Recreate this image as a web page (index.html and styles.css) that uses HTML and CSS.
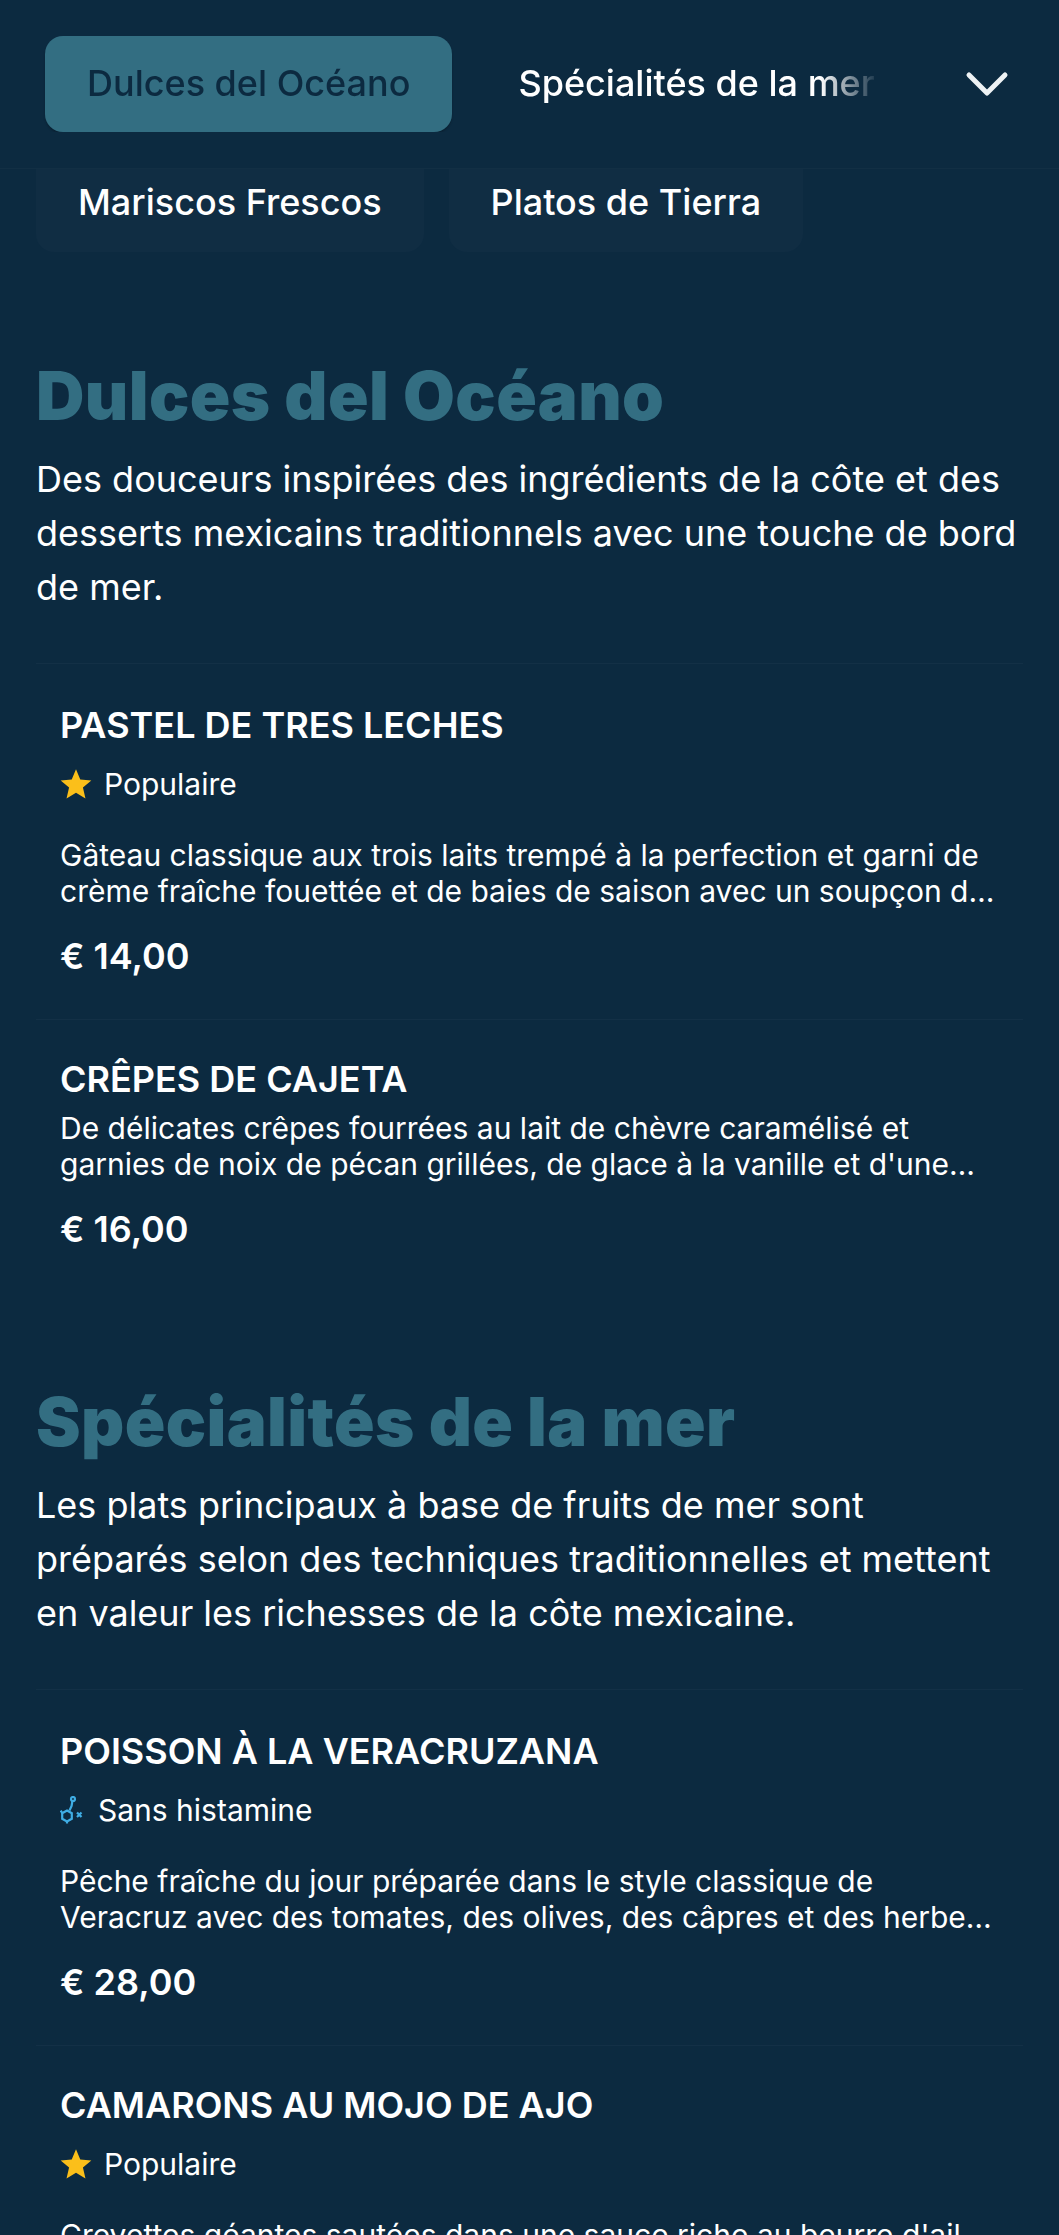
FILE: index.html
```html
<!DOCTYPE html>
<html lang="fr">
  <head>
    <meta charset="UTF-8" />
    <title>Menu</title>
    <link rel="stylesheet" href="styles.css">
  </head>
  <body>
    <header class="topBar">
      <nav class="tabScroller">
        <a class="tab tabActive">Dulces del Océano</a>
        <a class="tab">Spécialités de la mer</a>
        <a class="tab">Mariscos Frescos</a>
      </nav>
      <button class="moreButton" type="button" aria-label="Plus">
        <svg width="44" height="28" viewBox="0 0 44 28" fill="none">
          <path d="M4 5 L22 23 L40 5" stroke="#eef2f4" stroke-width="5" stroke-linecap="round" stroke-linejoin="round" />
        </svg>
      </button>
    </header>

    <div class="chipRow">
      <a class="chip">Mariscos Frescos</a>
      <a class="chip">Platos de Tierra</a>
    </div>

    <main>
      <section class="menuSection">
        <h2 class="sectionTitle">Dulces del Océano</h2>
        <p class="sectionText">Des douceurs inspirées des ingrédients de la côte et des desserts mexicains traditionnels avec une touche de bord de mer.</p>
        <div class="itemList">
          <article class="menuItem">
            <h3 class="itemTitle">PASTEL DE TRES LECHES</h3>
            <div class="itemTag">
              <svg class="starIcon" viewBox="0 0 24 24"><path d="M12 1 L15.2 8.6 L23.5 9.3 L17.2 14.7 L19.1 22.8 L12 18.5 L4.9 22.8 L6.8 14.7 L.5 9.3 L8.8 8.6 Z" /></svg>
              <span>Populaire</span>
            </div>
            <p class="itemText">Gâteau classique aux trois laits trempé à la perfection et garni de crème fraîche fouettée et de baies de saison avec un soupçon de cannelle et de vanille douce.</p>
            <div class="itemPrice">€ 14,00</div>
          </article>
          <article class="menuItem">
            <h3 class="itemTitle">CRÊPES DE CAJETA</h3>
            <p class="itemText">De délicates crêpes fourrées au lait de chèvre caramélisé et garnies de noix de pécan grillées, de glace à la vanille et d'une touche de sauce au rhum maison.</p>
            <div class="itemPrice">€ 16,00</div>
          </article>
        </div>
      </section>

      <section class="menuSection">
        <h2 class="sectionTitle">Spécialités de la mer</h2>
        <p class="sectionText">Les plats principaux à base de fruits de mer sont préparés selon des techniques traditionnelles et mettent en valeur les richesses de la côte mexicaine.</p>
        <div class="itemList">
          <article class="menuItem">
            <h3 class="itemTitle">POISSON À LA VERACRUZANA</h3>
            <div class="itemTag">
              <svg class="allergenIcon" viewBox="0 0 25 28" fill="none">
                <circle cx="13" cy="3" r="2" />
                <path d="M12.4 5 L11.6 10 L9.5 14.5" />
                <path d="M7 14.5 L11.8 17.2 L11.8 22.8 L7 25.5 L2.2 22.8 L2.2 17.2 Z" />
                <path d="M2.2 17.2 L.8 14.5" />
                <path d="M7 25.5 L7 27.5" />
                <path d="M17 16.5 L21.5 21 M21.5 16.5 L17 21" />
              </svg>
              <span>Sans histamine</span>
            </div>
            <p class="itemText">Pêche fraîche du jour préparée dans le style classique de Veracruz avec des tomates, des olives, des câpres et des herbes fraîches du jardin servie avec du riz blanc.</p>
            <div class="itemPrice">€ 28,00</div>
          </article>
          <article class="menuItem">
            <h3 class="itemTitle">CAMARONS AU MOJO DE AJO</h3>
            <div class="itemTag">
              <svg class="starIcon" viewBox="0 0 24 24"><path d="M12 1 L15.2 8.6 L23.5 9.3 L17.2 14.7 L19.1 22.8 L12 18.5 L4.9 22.8 L6.8 14.7 L.5 9.3 L8.8 8.6 Z" /></svg>
              <span>Populaire</span>
            </div>
            <p class="itemText">Crevettes géantes sautées dans une sauce riche au beurre d'ail caramélisé et aux piments guajillo, servies avec du riz et des légumes de saison grillés.</p>
            <div class="itemPrice">€ 26,00</div>
          </article>
        </div>
      </section>
    </main>
  </body>
</html>
```

FILE: styles.css
```css
html,
body {
  height: 2235px;
  overflow: hidden;
}
body {
  margin: 0;
  background-color: #0c2a40;
  color: #ffffff;
  font-family: "Inter", sans-serif;
}
.topBar {
  display: flex;
  align-items: center;
  height: 169px;
  border-bottom: 1px solid #122f44;
  box-sizing: border-box;
}
.tabScroller {
  display: flex;
  align-items: center;
  gap: 24px;
  width: 880px;
  padding-left: 45px;
  box-sizing: border-box;
  overflow: hidden;
  -webkit-mask-image: linear-gradient(to right, #000 820px, transparent 880px);
  mask-image: linear-gradient(to right, #000 820px, transparent 880px);
}
.tab {
  flex: none;
  padding: 0 42px;
  height: 96px;
  line-height: 94px;
  font-size: 36px;
  font-weight: 500;
  border-radius: 18px;
}
.tabActive {
  background-color: #336e82;
  color: #0c2a40;
  box-shadow: 0 2px 2px rgba(0, 0, 0, 0.2);
}
.moreButton {
  margin-left: 85px;
  padding: 0;
  border: none;
  background: none;
  display: flex;
}
.chipRow {
  display: flex;
  gap: 25px;
  height: 83px;
  padding-left: 36px;
  overflow: hidden;
}
.chip {
  height: 83px;
  line-height: 67px;
  padding: 0 42px;
  font-size: 36px;
  font-weight: 500;
  background-color: #102d43;
  border-radius: 0 0 18px 18px;
}
.menuSection {
  padding: 0 36px;
  margin-bottom: 90px;
}
.sectionTitle {
  margin: 0;
  padding-top: 104px;
  font-size: 67px;
  line-height: 80px;
  font-weight: 900;
  letter-spacing: 0.4px;
  color: #336e82;
}
.menuSection + .menuSection .sectionTitle {
  padding-top: 0;
}
.sectionText {
  margin: 16px 0 0;
  font-size: 36px;
  line-height: 54px;
}
.itemList {
  margin-top: 49px;
  border-top: 1px solid #133046;
}
.menuItem {
  padding: 37px 24px 41px;
  border-bottom: 1px solid #133046;
}
.menuItem:first-child {
  padding-top: 39px;
}
.menuItem:last-child {
  border-bottom: none;
}
.itemTitle {
  margin: 0;
  font-size: 36px;
  line-height: 44px;
  font-weight: 600;
}
.itemTag {
  display: flex;
  align-items: center;
  gap: 13px;
  margin-top: 15px;
  font-size: 30px;
  line-height: 44px;
}
.starIcon {
  width: 32px;
  height: 32px;
  margin-right: -1px;
  fill: #fbbf1a;
}
.allergenIcon {
  width: 25px;
  height: 28px;
  stroke: #3fade4;
  stroke-width: 2.2;
}
.itemText {
  margin: 9px 0 0;
  font-size: 30px;
  line-height: 36px;
  display: -webkit-box;
  -webkit-line-clamp: 2;
  -webkit-box-orient: vertical;
  overflow: hidden;
}
.itemTag + .itemText {
  margin-top: 31px;
}
.itemPrice {
  margin-top: 25px;
  font-size: 36px;
  line-height: 44px;
  font-weight: 600;
}
```
